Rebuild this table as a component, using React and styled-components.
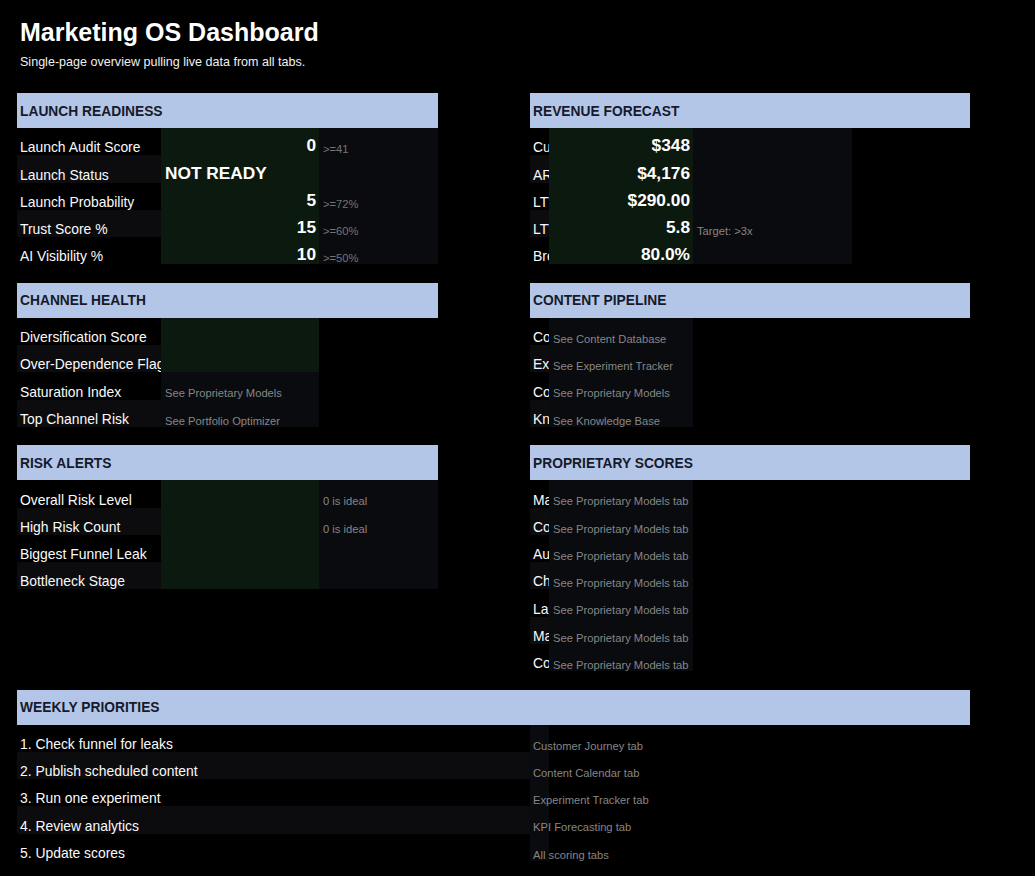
import React from 'react';
import styled, { createGlobalStyle } from 'styled-components';

const GlobalStyle = createGlobalStyle`
  html, body {
    margin: 0;
    background: #000;
  }
  body {
    font-family: "Liberation Sans", Arial, sans-serif;
    color: #fff;
  }
`;

const Page = styled.div`
  min-height: 876px;
  padding: 17px 0 0 17px;
  box-sizing: border-box;
  background: #000;
`;

const Title = styled.h1`
  margin: 0;
  font-size: 25px;
  line-height: 30px;
  font-weight: 700;
  color: #fff;
  padding-left: 3px;
`;

const Subtitle = styled.p`
  margin: 8px 0 23px;
  font-size: 12.55px;
  line-height: 15px;
  color: #f0f0f0;
  padding-left: 3px;
`;

const Band = styled.div`
  display: flex;
  align-items: flex-start;
  gap: 92px;
  margin-bottom: 18.5px;
`;

const Section = styled.section`
  width: ${({ $width }) => $width}px;
  flex: none;
`;

const HeaderBar = styled.div`
  height: 35px;
  display: flex;
  align-items: center;
  padding: 2px 0 0 3px;
  box-sizing: border-box;
  background: #b4c6e7;
  color: #161a2b;
  font-size: 13.8px;
  font-weight: 700;
  line-height: 1;
`;

const Grid = styled.div`
  display: grid;
  grid-template-columns: ${({ $cols }) => $cols};
  grid-auto-rows: 27.25px;
`;

const tones = {
  green: '#0c190f',
  dark: '#0a0b0e',
  none: 'transparent',
};

const LabelCell = styled.div`
  display: flex;
  align-items: flex-end;
  padding: 0 3px;
  overflow: hidden;
  white-space: nowrap;
  background: ${({ $alt }) => ($alt ? '#0c0c0f' : 'transparent')};
  font-size: 13.9px;
  line-height: 1;
  color: #fafafa;
`;

const Cell = styled.div`
  display: flex;
  align-items: flex-end;
  justify-content: ${({ $align }) => ($align === 'right' ? 'flex-end' : 'flex-start')};
  padding: 0 3px 0 ${({ $spill }) => ($spill ? 3 : 4)}px;
  white-space: nowrap;
  overflow: ${({ $spill }) => ($spill ? 'visible' : 'hidden')};
  background: ${({ $tone }) => tones[$tone || 'none']};
  line-height: 1;
`;

const Figure = styled.span`
  font-size: 17.3px;
  font-weight: 700;
  color: #fff;
  margin-bottom: 0.5px;
`;

const Hint = styled.span`
  font-size: 11.2px;
  color: ${({ $dim }) => ($dim ? '#747474' : '#868686')};
`;

const LEFT_COLS = '144px 158px 119px';
const RIGHT_COLS = '19px 144px 159px';

const launch = [
  { label: 'Launch Audit Score', num: '0', note: '>=41' },
  { label: 'Launch Status', status: 'NOT READY' },
  { label: 'Launch Probability', num: '5', note: '>=72%' },
  { label: 'Trust Score %', num: '15', note: '>=60%' },
  { label: 'AI Visibility %', num: '10', note: '>=50%' },
];

const revenue = [
  { label: 'Current MRR', num: '$348' },
  { label: 'ARR Run Rate', num: '$4,176' },
  { label: 'LTV', num: '$290.00' },
  { label: 'LTV:CAC Ratio', num: '5.8', note: 'Target: >3x', bright: true },
  { label: 'Break-even Progress', num: '80.0%' },
];

const channel = [
  { label: 'Diversification Score' },
  { label: 'Over-Dependence Flag' },
  { label: 'Saturation Index', hint: 'See Proprietary Models', tone: 'dark' },
  { label: 'Top Channel Risk', hint: 'See Portfolio Optimizer', tone: 'dark' },
];

const pipeline = [
  { label: 'Content Published', hint: 'See Content Database' },
  { label: 'Experiments Running', hint: 'See Experiment Tracker' },
  { label: 'Content Velocity', hint: 'See Proprietary Models' },
  { label: 'Knowledge Base Items', hint: 'See Knowledge Base' },
];

const risk = [
  { label: 'Overall Risk Level', note: '0 is ideal', bright: true },
  { label: 'High Risk Count', note: '0 is ideal', bright: true },
  { label: 'Biggest Funnel Leak' },
  { label: 'Bottleneck Stage' },
];

const proprietary = [
  'Market Fit Score',
  'Content Quality Index',
  'Audience Resonance',
  'Channel Momentum',
  'Launch Readiness Index',
  'Marketing Efficiency',
  'Competitive Edge',
].map((label) => ({ label, hint: 'See Proprietary Models tab' }));

const priorities = [
  { task: '1. Check funnel for leaks', where: 'Customer Journey tab' },
  { task: '2. Publish scheduled content', where: 'Content Calendar tab' },
  { task: '3. Run one experiment', where: 'Experiment Tracker tab' },
  { task: '4. Review analytics', where: 'KPI Forecasting tab' },
  { task: '5. Update scores', where: 'All scoring tabs' },
];

function Panel({ title, width, cols, rows, mainTone, sideTone }) {
  return (
    <Section $width={width}>
      <HeaderBar>{title}</HeaderBar>
      <Grid $cols={cols}>
        {rows.map((r, i) => (
          <React.Fragment key={r.label}>
            <LabelCell $alt={i % 2 === 1}>{r.label}</LabelCell>
            <Cell $tone={r.tone || mainTone} $align={r.num ? 'right' : 'left'}>
              {r.num && <Figure>{r.num}</Figure>}
              {r.status && <Figure>{r.status}</Figure>}
              {r.hint && <Hint>{r.hint}</Hint>}
            </Cell>
            <Cell $tone={sideTone}>{r.note && <Hint $dim={!r.bright}>{r.note}</Hint>}</Cell>
          </React.Fragment>
        ))}
      </Grid>
    </Section>
  );
}

export default function App() {
  return (
    <Page>
      <GlobalStyle />
      <Title>Marketing OS Dashboard</Title>
      <Subtitle>Single-page overview pulling live data from all tabs.</Subtitle>

      <Band>
        <Panel title="LAUNCH READINESS" width={421} cols={LEFT_COLS} rows={launch} mainTone="green" sideTone="dark" />
        <Panel title="REVENUE FORECAST" width={440} cols={RIGHT_COLS} rows={revenue} mainTone="green" sideTone="dark" />
      </Band>

      <Band>
        <Panel title="CHANNEL HEALTH" width={421} cols={LEFT_COLS} rows={channel} mainTone="green" sideTone="none" />
        <Panel title="CONTENT PIPELINE" width={440} cols={RIGHT_COLS} rows={pipeline} mainTone="dark" sideTone="none" />
      </Band>

      <Band>
        <Panel title="RISK ALERTS" width={421} cols={LEFT_COLS} rows={risk} mainTone="green" sideTone="dark" />
        <Panel title="PROPRIETARY SCORES" width={440} cols={RIGHT_COLS} rows={proprietary} mainTone="dark" sideTone="none" />
      </Band>

      <Section $width={953}>
        <HeaderBar>WEEKLY PRIORITIES</HeaderBar>
        <Grid $cols="513px 19px">
          {priorities.map((p, i) => (
            <React.Fragment key={p.task}>
              <LabelCell $alt={i % 2 === 1}>{p.task}</LabelCell>
              <Cell $tone="dark" $spill>
                <Hint>{p.where}</Hint>
              </Cell>
            </React.Fragment>
          ))}
        </Grid>
      </Section>
    </Page>
  );
}
